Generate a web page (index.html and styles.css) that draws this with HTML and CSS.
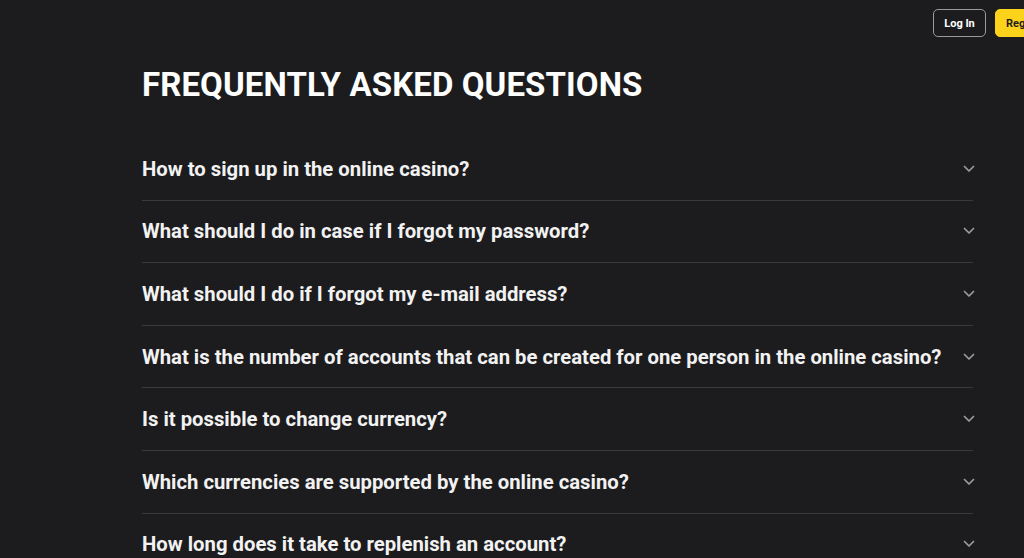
FILE: index.html
```html
<!DOCTYPE html>
<html lang="en">
<head>
<meta charset="utf-8">
<title>FAQ</title>
<link rel="stylesheet" href="styles.css">
</head>
<body>
<header class="topbar">
  <button class="btn btn-login">Log In</button>
  <button class="btn btn-register">Registration</button>
</header>
<main class="faq">
  <h1 class="faq-title">FREQUENTLY ASKED QUESTIONS</h1>
  <ul class="faq-list">
    <li class="faq-item"><span class="q">How to sign up in the online casino?</span><svg class="chev" viewBox="0 0 12 8"><path d="M1.5 1.5 6 6l4.5-4.5"/></svg></li>
    <li class="faq-item"><span class="q">What should I do in case if I forgot my password?</span><svg class="chev" viewBox="0 0 12 8"><path d="M1.5 1.5 6 6l4.5-4.5"/></svg></li>
    <li class="faq-item"><span class="q">What should I do if I forgot my e-mail address?</span><svg class="chev" viewBox="0 0 12 8"><path d="M1.5 1.5 6 6l4.5-4.5"/></svg></li>
    <li class="faq-item"><span class="q">What is the number of accounts that can be created for one person in the online casino?</span><svg class="chev" viewBox="0 0 12 8"><path d="M1.5 1.5 6 6l4.5-4.5"/></svg></li>
    <li class="faq-item"><span class="q">Is it possible to change currency?</span><svg class="chev" viewBox="0 0 12 8"><path d="M1.5 1.5 6 6l4.5-4.5"/></svg></li>
    <li class="faq-item"><span class="q">Which currencies are supported by the online casino?</span><svg class="chev" viewBox="0 0 12 8"><path d="M1.5 1.5 6 6l4.5-4.5"/></svg></li>
    <li class="faq-item"><span class="q">How long does it take to replenish an account?</span><svg class="chev" viewBox="0 0 12 8"><path d="M1.5 1.5 6 6l4.5-4.5"/></svg></li>
  </ul>
</main>
</body>
</html>
```

FILE: styles.css
```css
html, body {
  margin: 0;
  padding: 0;
  background: #1c1c1e;
  overflow: hidden;
  height: 558px;
}
body {
  font-family: Roboto, "Liberation Sans", Arial, sans-serif;
  color: #f5f5f5;
  width: 1024px;
}
.topbar {
  display: flex;
  justify-content: flex-start;
  gap: 9px;
  padding: 9px 0 0 933px;
  height: 28px;
  white-space: nowrap;
}
.btn {
  flex: none;
  height: 28px;
  border-radius: 5px;
  font-family: Roboto, "Liberation Sans", Arial, sans-serif;
  font-weight: 700;
  font-size: 11px;
  padding: 0 10px;
  cursor: pointer;
}
.btn-login {
  width: 53px;
  background: #1c1c1e;
  color: #ffffff;
  border: 1px solid #9a9a9c;
}
.btn-register {
  width: 96px;
  background: #fcd21b;
  color: #1c1c1e;
  border: 1px solid #fcd21b;
  text-align: left;
}
.faq {
  margin-left: 142px;
  width: 831px;
}
.faq-title {
  margin: 28px 0 0 0;
  font-size: 33px;
  font-weight: 700;
  line-height: 40px;
  letter-spacing: 0.1px;
  color: #ffffff;
}
.faq-list {
  list-style: none;
  margin: 34px 0 0 0;
  padding: 0;
}
.faq-item {
  display: flex;
  align-items: center;
  justify-content: space-between;
  height: 61.6px;
  border-bottom: 1px solid #3a3a3c;
  font-size: 20.3px;
  font-weight: 700;
  color: #f2f2f2;
}
.faq-item:first-child {
  margin-top: -1px;
}
.chev {
  width: 12px;
  height: 8px;
  margin-right: -2px;
  flex: none;
  fill: none;
  stroke: #9b9b9d;
  stroke-width: 1.7;
  stroke-linecap: round;
  stroke-linejoin: round;
}
```
